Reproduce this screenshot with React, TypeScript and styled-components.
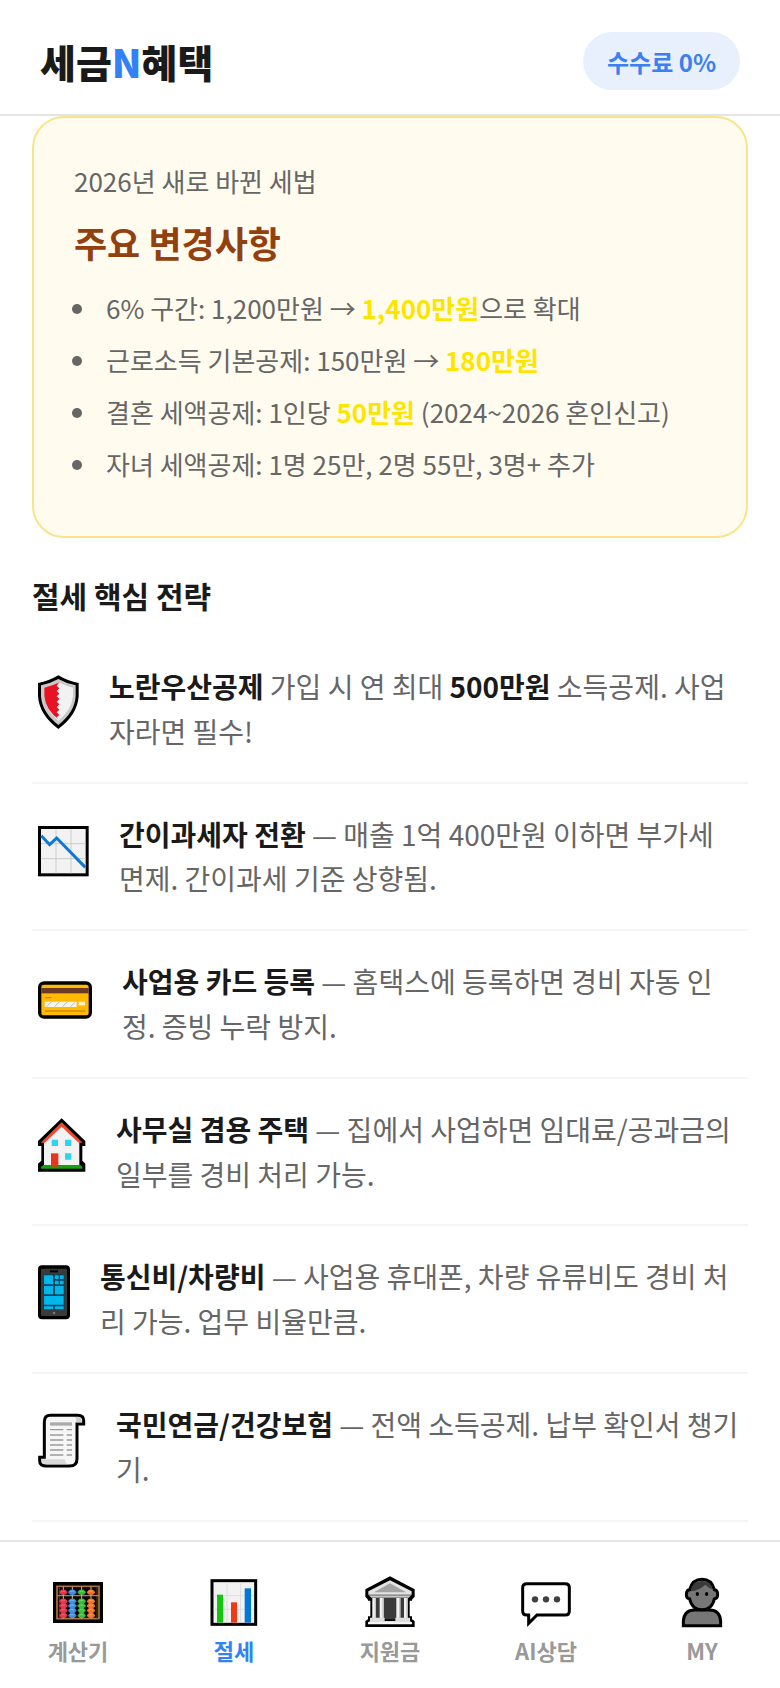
import React from "react";
import styled, { createGlobalStyle } from "styled-components";

const GlobalStyle = createGlobalStyle`
  * { box-sizing: border-box; }
  body {
    margin: 0;
    background: #ffffff;
    color: #1a1a1a;
    font-family: "Noto Sans CJK KR", "Noto Sans", sans-serif;
    font-size: 28px;
  }
`;

const Page = styled.div`
  display: flex;
  flex-direction: column;
  min-height: 100vh;
`;

const Header = styled.header`
  position: sticky;
  top: 0;
  z-index: 1;
  display: flex;
  align-items: center;
  justify-content: space-between;
  padding: 32px 40px 24px;
  background: #ffffff;
  border-bottom: 2px solid #e5e5e8;
`;

const Logo = styled.h1`
  margin: 0;
  font-size: 39px;
  line-height: 58px;
  font-weight: 900;
`;

const LogoAccent = styled.span`
  color: #3182f6;
`;

const FeeBadge = styled.span`
  padding: 2px 24px 0;
  border-radius: 40px;
  background: #e8f0fe;
  color: #3b7ff0;
  font-size: 24px;
  line-height: 56px;
  font-weight: 700;
`;

const Main = styled.main`
  flex: 1;
  padding: 0 32px 16px;
`;

const NoticeCard = styled.section`
  padding: 40px 40px 46px;
  border: 2px solid #fae48b;
  border-radius: 32px;
  background: #fffbee;
  color: #666666;
  font-size: 26px;
`;

const NoticeLabel = styled.p`
  margin: 0;
  line-height: 46px;
`;

const NoticeTitle = styled.h2`
  margin: 8px 0 10px;
  color: #92400e;
  font-size: 36px;
  line-height: 60px;
  font-weight: 700;
`;

const ChangeList = styled.ul`
  margin: 0;
  padding-left: 32px;
  list-style: none;
  line-height: 52px;
`;

const ChangeItem = styled.li`
  &::before {
    content: "";
    display: inline-block;
    width: 10px;
    height: 10px;
    margin: 0 24px 6px -34px;
    border-radius: 50%;
    background: #666666;
    vertical-align: middle;
  }
`;

const Highlight = styled.strong`
  color: #fee500;
  font-weight: 700;
`;

const SectionTitle = styled.h2`
  margin: 34px 0 18px;
  font-size: 30px;
  line-height: 46px;
  font-weight: 700;
`;

const TipList = styled.ul`
  margin: 0;
  padding: 0;
  list-style: none;
`;

const TipRow = styled.li`
  display: flex;
  align-items: flex-start;
  gap: 24px;
  padding: 28px 0;
  border-bottom: 2px solid #f4f4f4;
`;

const TipIcon = styled.svg`
  flex: none;
  height: 72px;
`;

const TipText = styled.p`
  flex: 1;
  margin: 0;
  padding-right: 6px;
  color: #666666;
  font-size: 28px;
  line-height: 1.6;
  word-break: break-all;

  strong {
    color: #1a1a1a;
    font-weight: 700;
  }
`;

const TabBar = styled.nav`
  position: sticky;
  bottom: 0;
  display: grid;
  grid-template-columns: repeat(5, 1fr);
  padding: 32px 0 22px;
  background: #ffffff;
  border-top: 2px solid #e5e5e5;
`;

const TabButton = styled.button<{ $active?: boolean }>`
  display: flex;
  flex-direction: column;
  align-items: center;
  gap: 4px;
  padding: 0;
  border: 0;
  background: none;
  color: ${(p) => (p.$active ? "#3182f6" : "#999999")};
  font-family: inherit;
  font-size: 22px;
  line-height: 32px;
  font-weight: 700;
  cursor: pointer;
`;

const TabIcon = styled.svg`
  width: 60px;
  height: 56px;
`;

const ShieldIcon = () => (
  <TipIcon width="53" viewBox="36 13 159 216" aria-hidden="true">
    <path d="M115 47 Q143 64 176 70 V110 Q172 166 115 208 Q58 166 54 110 V70 Q87 64 115 47Z" fill="#000" />
    <path d="M115 58 Q140 72 167 77 V110 Q164 158 115 196 Q66 158 63 110 V77 Q90 72 115 58Z" fill="#c9c9c9" />
    <path d="M115 68 Q138 80 159 84 V110 Q155 150 115 184 Q76 150 73 110 V84 Q92 80 115 68Z" fill="#f2f2f2" />
    <path d="M118 68 L110 78 L118 86 L110 94 L118 102 L110 110 L118 118 L110 126 L118 134 L110 142 L118 150 L110 158 L118 166 L110 173 L118 181 Q77 152 73 110 V84 Q98 78 118 68Z" fill="#e81224" />
  </TipIcon>
);

const ChartDownIcon = () => (
  <TipIcon width="63" viewBox="36 6 189 216" aria-hidden="true">
    <rect x="58.500" y="52.500" width="143" height="142" fill="#f2f2f2" stroke="#000" strokeWidth="9" />
    <path d="M108 57V190M153 57V190M63 101H197M63 146H197" stroke="#ccc" strokeWidth="3" />
    <path d="M64 77 L89 104 L110 84 L196 172" fill="none" stroke="#0f78d4" strokeWidth="9" />
  </TipIcon>
);

const CardIcon = () => (
  <TipIcon width="66" viewBox="36 -1 198 216" aria-hidden="true">
    <rect x="59" y="71" width="152" height="102" rx="13" fill="#ffb900" stroke="#000" strokeWidth="10" />
    <rect x="64" y="86" width="142" height="16" fill="#6b3a22" />
    <path d="M76 115H94" stroke="#b98a14" strokeWidth="4" />
    <path d="M75 155H196" stroke="#d38b00" strokeWidth="5" />
    <rect x="74" y="127" width="96" height="16" fill="#f5f3e6" />
    <path d="M80 142L93 128M104 142L117 128M128 142L141 128M152 142L165 128" stroke="#b9c0bd" strokeWidth="3" />
    <rect x="176" y="127" width="19" height="11" fill="#fff0bd" />
  </TipIcon>
);

const HouseIcon = () => (
  <TipIcon width="60" viewBox="36 22 180 216" aria-hidden="true">
    <path d="M125 56 L196 124 V139 H187 V183 L196 192 V216 H54 V192 L64 183 V139 H54 V124Z" fill="#000" />
    <path d="M125 72 L178 124 V197 H72 V124Z" fill="#f2f2f2" />
    <path d="M125 68 L188 129 H176 L125 81 L74 129 H62Z" fill="#f04a2b" />
    <path d="M63 207V202L70 196H181L187 202V207Z" fill="#13a10e" />
    <rect x="93" y="161" width="22" height="40" fill="#e8351f" />
    <path d="M95 120h19v19h-19zM135 120h19v19h-19zM135 161h19v19h-19z" fill="#31d2f7" />
  </TipIcon>
);

const PhoneIcon = () => (
  <TipIcon width="44" viewBox="36 14 132 216" aria-hidden="true">
    <rect x="54" y="48" width="96" height="162" rx="12" fill="#000" />
    <rect x="63" y="58" width="78" height="142" rx="3" fill="#3b3b3b" />
    <rect x="70" y="75" width="63" height="107" fill="#00455c" />
    <path d="M90 66H114" stroke="#000" strokeWidth="6" />
    <path d="M72 78h27v27h-27zM105 78h11v11h-11zM120 78h11v11h-11zM105 94h11v11h-11zM120 94h11v11h-11zM72 110h27v25h-27zM105 110h26v25h-26zM72 140h59v26h-59zM72 171h27v9h-27zM105 171h26v9h-26z" fill="#00b7eb" />
    <circle cx="102" cy="191" r="4" fill="#777" />
  </TipIcon>
);

const ScrollIcon = () => (
  <TipIcon width="60" viewBox="36 22 180 216" aria-hidden="true">
    <path d="M91 62H173Q191 62 191 77V88H171V192Q171 214 149 214H80Q59 214 59 198V188H73V82Q73 62 91 62Z" fill="#f6f6f6" stroke="#000" strokeWidth="9" />
    <path d="M168 67Q186 67 186 83H169Q172 74 165 67Z" fill="#ccc" />
    <path d="M64 194H134Q136 209 147 209H80Q66 209 64 194Z" fill="#d9d9d9" />
    <path d="M90 88H156" stroke="#ababab" strokeWidth="10" />
    <path d="M90 105H130M140 105H156M90 121H130M140 121H156M90 136H130M140 136H156M90 151H130M140 151H156M90 166H130M140 166H156M90 181H130M140 181H156" stroke="#9c9c9c" strokeWidth="4" />
  </TipIcon>
);

const beadColumns = [
  { x: 190, color: "#e8364a", light: "#f25567" },
  { x: 217, color: "#3f8fe0", light: "#69adf0" },
  { x: 245, color: "#3dbb3a", light: "#62d35d" },
  { x: 273, color: "#f0742a", light: "#ff9348" },
];

const AbacusIcon = () => (
  <TabIcon viewBox="144 192 180 168" aria-hidden="true">
    <rect x="159" y="216" width="150" height="123" fill="#000" />
    <rect x="171" y="229" width="126" height="97" fill="#0b0605" stroke="#a87345" strokeWidth="5" />
    <path d="M178 230V326M291 230V326" stroke="#5d3a20" strokeWidth="3" />
    <path d="M171 257H297" stroke="#b57e4c" strokeWidth="4" />
    {beadColumns.map((c) => (
      <g key={c.x}>
        <path d={`M${c.x} 230V326`} stroke="#d8b48a" strokeWidth="3" />
        {[246, 273, 287, 301, 316].map((y) => (
          <g key={y}>
            <path d={`M${c.x - 6} ${y - 7}h12l6 6v3l-6 6h-12l-6 -6v-3z`} fill={c.color} />
            <path d={`M${c.x - 5} ${y - 4}h8l4 4h-15z`} fill={c.light} />
          </g>
        ))}
      </g>
    ))}
  </TabIcon>
);

const BarsIcon = () => (
  <TabIcon viewBox="612 192 180 168" aria-hidden="true">
    <rect x="636" y="212" width="131" height="131" fill="#f2f2f2" stroke="#000" strokeWidth="9" />
    <path d="M681 217V338M722 217V338M641 257H762M641 298H762" stroke="#dedede" strokeWidth="3" />
    <rect x="651" y="254" width="18" height="84" fill="#16c60c" />
    <rect x="693" y="277" width="18" height="61" fill="#f03a17" />
    <rect x="734" y="235" width="19" height="103" fill="#0078d7" />
  </TabIcon>
);

const BankIcon = () => (
  <TabIcon viewBox="1080 192 180 168" aria-hidden="true">
    <path d="M1170 199 L1244 238 V260 L1236 269 V272 H1229 V319 H1236 V328 L1244 333 V351 H1096 V333 L1104 328 V319 H1111 V272 H1104 V269 L1096 260 V238Z" fill="#000" />
    <path d="M1170 211 L1235 244 V254 H1105 V244Z" fill="#e3e3e3" />
    <path d="M1170 220 L1218 247 H1122Z" fill="#a3a3a3" />
    <path d="M1106 256H1234L1226 263H1114Z" fill="#c6c6c6" />
    <rect x="1118" y="264" width="104" height="64" fill="#3b3b3b" />
    <path d="M1117 264h11v63h-11zM1139 264h12v63h-12zM1189 264h12v63h-12zM1212 264h11v63h-11z" fill="#f2f2f2" />
    <path d="M1124 264h4v63h-4zM1147 264h4v63h-4zM1197 264h4v63h-4zM1219 264h4v63h-4z" fill="#c4c4c4" />
    <path d="M1110 323H1154V333H1186V323H1230V333L1236 338V342H1104V338L1110 333Z" fill="#dedede" />
    <path d="M1104 337H1236V343H1104Z" fill="#f7f7f7" />
  </TabIcon>
);

const ChatIcon = () => (
  <TabIcon viewBox="378 192 180 168" aria-hidden="true">
    <path d="M410 221H526Q538 221 538 233V303Q538 315 526 315H441L416 340V315H410Q398 315 398 303V233Q398 221 410 221Z" fill="#fff" stroke="#000" strokeWidth="9" />
    <circle cx="435" cy="268" r="9.500" fill="#404040" />
    <circle cx="468" cy="268" r="9.500" fill="#404040" />
    <circle cx="501" cy="268" r="9.500" fill="#404040" />
  </TabIcon>
);

const PersonIcon = () => (
  <TabIcon viewBox="846 192 180 168" aria-hidden="true">
    <path d="M880 347V334Q882 300 914 300H958Q990 300 992 334V347Z" fill="#767676" stroke="#000" strokeWidth="9" />
    <path d="M936 208Q965 208 973 239Q983 240 983 253Q983 266 973 267Q966 299 936 299Q906 299 899 267Q889 266 889 253Q889 240 899 239Q907 208 936 208Z" fill="#767676" stroke="#000" strokeWidth="9" />
    <path d="M903 244Q906 213 936 213Q961 213 969 238Q956 235 946 224Q931 239 903 244Z" fill="#3b3b3b" />
    <ellipse cx="922" cy="252" rx="5" ry="6" fill="#000" />
    <ellipse cx="950" cy="252" rx="5" ry="6" fill="#000" />
  </TabIcon>
);

const tips: { id: string; icon: React.ReactNode; text: React.ReactNode }[] = [
  { id: "umbrella", icon: <ShieldIcon />, text: <><strong>노란우산공제</strong> 가입 시 연 최대 <strong>500만원</strong> 소득공제. 사업자라면 필수!</> },
  { id: "simple", icon: <ChartDownIcon />, text: <><strong>간이과세자 전환</strong> — 매출 1억 400만원 이하면 부가세 면제. 간이과세 기준 상향됨.</> },
  { id: "card", icon: <CardIcon />, text: <><strong>사업용 카드 등록</strong> — 홈택스에 등록하면 경비 자동 인정. 증빙 누락 방지.</> },
  { id: "home", icon: <HouseIcon />, text: <><strong>사무실 겸용 주택</strong> — 집에서 사업하면 임대료/공과금의 일부를 경비 처리 가능.</> },
  { id: "phone", icon: <PhoneIcon />, text: <><strong>통신비/차량비</strong> — 사업용 휴대폰, 차량 유류비도 경비 처리 가능. 업무 비율만큼.</> },
  { id: "pension", icon: <ScrollIcon />, text: <><strong>국민연금/건강보험</strong> — 전액 소득공제. 납부 확인서 챙기기.</> },
];

const tabs = [
  { label: "계산기", icon: <AbacusIcon /> },
  { label: "절세", icon: <BarsIcon />, active: true },
  { label: "지원금", icon: <BankIcon /> },
  { label: "AI상담", icon: <ChatIcon /> },
  { label: "MY", icon: <PersonIcon /> },
];

export default function App() {
  return (
    <Page>
      <GlobalStyle />
      <Header>
        <Logo>세금<LogoAccent>N</LogoAccent>혜택</Logo>
        <FeeBadge>수수료 0%</FeeBadge>
      </Header>
      <Main>
        <NoticeCard>
          <NoticeLabel>2026년 새로 바뀐 세법</NoticeLabel>
          <NoticeTitle>주요 변경사항</NoticeTitle>
          <ChangeList>
            <ChangeItem>6% 구간: 1,200만원 → <Highlight>1,400만원</Highlight>으로 확대</ChangeItem>
            <ChangeItem>근로소득 기본공제: 150만원 → <Highlight>180만원</Highlight></ChangeItem>
            <ChangeItem>결혼 세액공제: 1인당 <Highlight>50만원</Highlight> (2024~2026 혼인신고)</ChangeItem>
            <ChangeItem>자녀 세액공제: 1명 25만, 2명 55만, 3명+ 추가</ChangeItem>
          </ChangeList>
        </NoticeCard>
        <SectionTitle>절세 핵심 전략</SectionTitle>
        <TipList>
          {tips.map((tip) => (
            <TipRow key={tip.id}>
              {tip.icon}
              <TipText>{tip.text}</TipText>
            </TipRow>
          ))}
        </TipList>
      </Main>
      <TabBar>
        {tabs.map((tab) => (
          <TabButton key={tab.label} type="button" $active={tab.active} aria-current={tab.active ? "page" : undefined}>
            {tab.icon}
            {tab.label}
          </TabButton>
        ))}
      </TabBar>
    </Page>
  );
}
